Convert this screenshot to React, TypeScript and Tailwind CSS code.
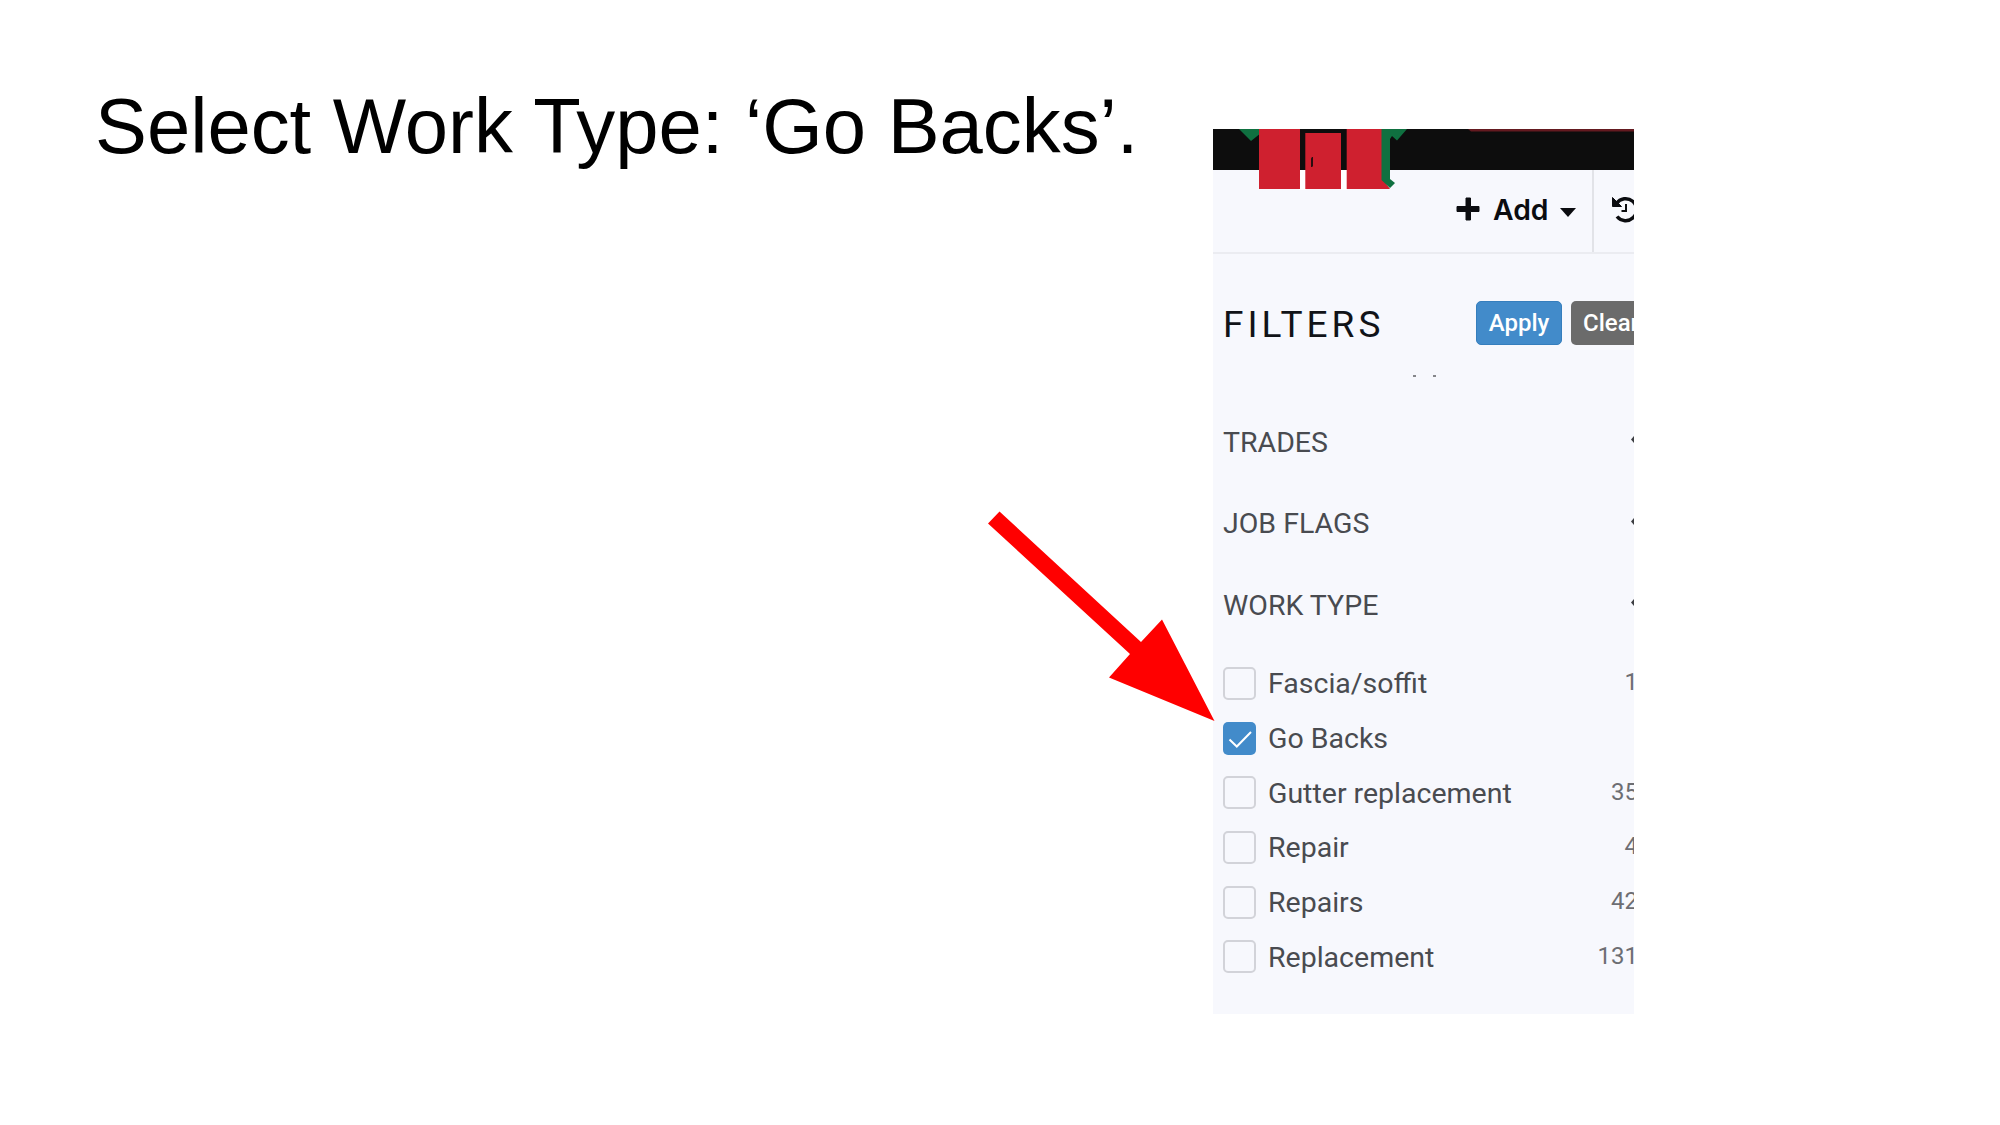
import React from "react";

const groups = ["TRADES", "JOB FLAGS", "WORK TYPE"];

const workTypes = [
  { label: "Fascia/soffit", count: "1", checked: false },
  { label: "Go Backs", count: "", checked: true },
  { label: "Gutter replacement", count: "35", checked: false },
  { label: "Repair", count: "4", checked: false },
  { label: "Repairs", count: "42", checked: false },
  { label: "Replacement", count: "131", checked: false },
];

function Logo() {
  return (
    <svg className="absolute left-0 top-0" width="421" height="64" viewBox="0 0 421 64">
      <path d="M255 0h166v2.500H258z" fill="#641a20" />
      <path d="M86 41h7v20h-7zM128 41h6v20h-6z" fill="#ffffff" />
      <path d="M26 0h22v4L38 12z" fill="#0f7040" />
      <path d="M46 0h41v60H46zM92.3 4H128v56H92.3zM133.7 0H170v50l7 10h-43.3z" fill="#cf202f" />
      <path d="M168.5 0H194L184 11.5 179 7l-2 3v40l5 4-5 5-8.5-8z" fill="#0f7040" />
      <path d="M98.500 29.500l1-1.500v9l-1 1z" fill="#2a0d10" stroke="#2a0d10" />
    </svg>
  );
}

function Checkbox({ checked }: { checked: boolean }) {
  return checked ? (
    <span className="flex h-[33px] w-[33px] shrink-0 items-center justify-center rounded-[5px] bg-[#428bca]">
      <svg width="33" height="33" viewBox="0 0 33 33" fill="none" stroke="#fff" strokeWidth="2">
        <path d="M6.500 17.500l7.300 7L28 10" />
      </svg>
    </span>
  ) : (
    <span className="h-[33px] w-[33px] shrink-0 rounded-[5px] border-2 border-[#d2d3d9]" />
  );
}

export default function App() {
  return (
    <div className="relative flex h-[1125px] w-[2000px] overflow-hidden bg-white">
      <h1 className="w-[1213px] shrink-0 whitespace-nowrap pl-[95px] pt-[82px] font-['Liberation_Sans',sans-serif] text-[77.800px] leading-[88px] text-black">
        Select Work Type: ‘Go Backs’.
      </h1>

      <section className="relative mt-[129px] flex h-[885px] w-[421px] flex-col overflow-hidden bg-[#f7f8fd] font-[Roboto,sans-serif]">
        <div className="h-[41px] shrink-0 bg-[#0d0d0d]" />
        <Logo />

        <div className="flex h-[84px] shrink-0 border-b-2 border-[#ebecf1]">
          <div className="flex w-[381px] shrink-0 items-start border-r-2 border-[#e2e3e8] pl-[243px] font-[Inter,sans-serif] text-[28.300px] font-semibold leading-[34px] text-[#0b0c10]">
            <svg className="mt-[27px]" width="24" height="24" viewBox="0 0 24 24" fill="#0b0c10">
              <path d="M10 1h4.500v8.500H23v5h-8.500V23H10v-8.500H1v-5h9z" stroke="#0b0c10" strokeLinejoin="round" />
            </svg>
            <span className="ml-[13px] mt-[23px]">Add</span>
            <svg className="ml-[12px] mt-[38px] shrink-0" width="16" height="9" viewBox="0 0 16 9">
              <path d="M0 0h16L8 9z" fill="#0b0c10" />
            </svg>
          </div>
          <svg className="ml-[18px] mt-[26px] shrink-0" width="28" height="28" viewBox="0 0 28 28" fill="none" stroke="#0b0c10">
            <path d="M4.500 7.500A11 11 0 1 1 5 20.500" strokeWidth="3.500" />
            <path d="M.5 1.500v9h9z" fill="#0b0c10" strokeWidth="1" />
            <path d="M14 8v7H9.500" strokeWidth="2" />
          </svg>
        </div>

        <div className="mt-[47px] flex h-[44px] shrink-0 items-center pl-[10px]">
          <h2 className="mt-[3px] w-[253px] shrink-0 text-[37px] leading-[44px] tracking-[4px] text-[#111318]">FILTERS</h2>
          <button className="flex h-[44px] w-[86px] shrink-0 items-center justify-center rounded-[5px] border border-[#357ebd] bg-[#428bca] text-[24px] font-medium leading-[30px] text-white">
            Apply
          </button>
          <button className="ml-[9px] h-[44px] w-[90px] shrink-0 rounded-[5px] bg-[#6b6b6b] pl-[12px] text-left text-[24px] font-medium leading-[30px] text-white">
            Clear
          </button>
        </div>

        <div className="ml-[200px] mt-[30px] flex h-[2px] shrink-0 gap-[17px]">
          <span className="h-[2px] w-[3px] bg-[#85868a]" />
          <span className="h-[2px] w-[3px] bg-[#85868a]" />
        </div>

        <div className="mt-[25px] shrink-0">
          {groups.map((name) => (
            <div key={name} className="flex h-[81.500px] items-center justify-between pl-[10px] text-[28.500px] leading-[34px] text-[#494b50]">
              <span>{name}</span>
              <svg className="mb-[6px]" width="3" height="7" viewBox="0 0 3 7">
                <path d="M3 0v7L0 3.500z" fill="#3c3e42" />
              </svg>
            </div>
          ))}
        </div>

        <ul className="mt-[9.500px] shrink-0">
          {workTypes.map((item) => (
            <li key={item.label} className="flex h-[54.700px] items-center pl-[10px] text-[28.500px] leading-[34px] text-[#494b50]">
              <Checkbox checked={item.checked} />
              <span className="ml-[12px] mt-[2px] grow">{item.label}</span>
              <span className="-mr-[4px] mb-[2px] text-[24px] text-[#6d6e73]">{item.count}</span>
            </li>
          ))}
        </ul>
      </section>

      <svg className="absolute left-[980px] top-[505px]" width="240" height="220" viewBox="980 505 240 220">
        <path d="M999.500 511.500L1141 642l21-22.500L1214.500 721 1109 677.500l21-23.500L988 523.500z" fill="#ff0000" />
      </svg>
    </div>
  );
}
